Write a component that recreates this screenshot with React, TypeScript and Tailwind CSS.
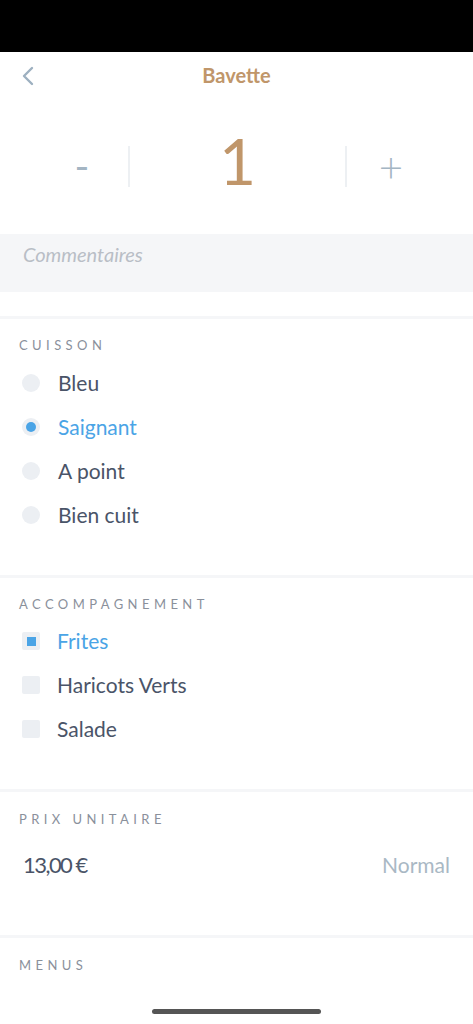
import { useState } from "react";

const font = { fontFamily: "Lato, 'Open Sans', sans-serif" };

const cuissons = ["Bleu", "Saignant", "A point", "Bien cuit"];
const accompagnements = ["Frites", "Haricots Verts", "Salade"];

function SectionTitle({ children }: { children: string }) {
  return (
    <div className="pl-[19px] text-[13px] tracking-[0.34em] text-[#8a909b] leading-none">
      {children}
    </div>
  );
}

function Divider() {
  return <div className="h-[3px] bg-[#f5f6f8]" />;
}

export default function App() {
  const [qty, setQty] = useState(1);
  const [cuisson, setCuisson] = useState("Saignant");
  const [sides, setSides] = useState<string[]>(["Frites"]);

  const toggleSide = (s: string) =>
    setSides(prev => (prev.includes(s) ? prev.filter(x => x !== s) : [...prev, s]));

  return (
    <div className="relative w-[473px] h-[1024px] bg-white overflow-hidden" style={font}>
      <div className="h-[52px] bg-black" />

      {/* header */}
      <div className="relative flex items-center justify-center h-[46px]">
        <button className="absolute left-[20px] top-[14px] text-[#9db0c0]">
          <svg width="16" height="20" viewBox="0 0 16 20" fill="none">
            <path d="M12 2 L4 10 L12 18" stroke="currentColor" strokeWidth="2.4" strokeLinecap="round" strokeLinejoin="round" />
          </svg>
        </button>
        <h1 className="text-[20px] font-bold text-[#c0966a]">Bavette</h1>
      </div>

      {/* stepper */}
      <div className="flex items-center h-[136px]">
        <button
          className="w-[128px] flex justify-center text-[#a4b5c3] text-[40px] leading-none pl-[36px]"
          onClick={() => setQty(q => Math.max(1, q - 1))}
        >
          -
        </button>
        <div className="w-[2px] h-[41px] bg-[#edf0f3]" />
        <div className="flex-1 text-center text-[64px] text-[#c0966a] leading-none -mt-[10px]">{qty}</div>
        <div className="w-[2px] h-[41px] bg-[#edf0f3]" />
        <button
          className="w-[126px] flex justify-center text-[#a4b5c3] text-[42px] font-light leading-none pr-[38px]"
          onClick={() => setQty(q => q + 1)}
        >
          +
        </button>
      </div>

      {/* commentaires */}
      <div className="h-[58px] bg-[#f5f6f8] flex items-center pl-[23px] pb-[19px]">
        <span className="text-[20px] italic text-[#b9bec6]">Commentaires</span>
      </div>

      <div className="h-[24px]" />
      <Divider />

      {/* cuisson */}
      <div className="pt-[20px] h-[256px]">
        <SectionTitle>CUISSON</SectionTitle>
        <div className="mt-[9px] flex flex-col">
          {cuissons.map(c => {
            const active = c === cuisson;
            return (
              <button key={c} className="flex items-center h-[44px] pl-[22px]" onClick={() => setCuisson(c)}>
                <span className="w-[18px] h-[18px] rounded-full bg-[#eceff3] flex items-center justify-center">
                  {active && <span className="w-[10px] h-[10px] rounded-full bg-[#4aa4e6]" />}
                </span>
                <span className={`ml-[18px] text-[21px] ${active ? "text-[#4aa4e6]" : "text-[#4a5468]"}`}>{c}</span>
              </button>
            );
          })}
        </div>
      </div>
      <Divider />

      {/* accompagnement */}
      <div className="pt-[20px] h-[211px]">
        <SectionTitle>ACCOMPAGNEMENT</SectionTitle>
        <div className="mt-[8px] flex flex-col">
          {accompagnements.map(s => {
            const active = sides.includes(s);
            return (
              <button key={s} className="flex items-center h-[44px] pl-[22px]" onClick={() => toggleSide(s)}>
                <span className="w-[18px] h-[18px] rounded-[2px] bg-[#eceff3] flex items-center justify-center">
                  {active && <span className="w-[9px] h-[9px] bg-[#4aa4e6]" />}
                </span>
                <span className={`ml-[17px] text-[21px] ${active ? "text-[#4aa4e6]" : "text-[#4a5468]"}`}>{s}</span>
              </button>
            );
          })}
        </div>
      </div>
      <Divider />

      {/* prix */}
      <div className="pt-[21px] h-[143px]">
        <SectionTitle>PRIX UNITAIRE</SectionTitle>
        <div className="mt-[22px] flex items-center justify-between pl-[23px] pr-[23px]">
          <span className="text-[22px] text-[#4a5468] tracking-[-0.07em]">13,00 €</span>
          <span className="text-[21px] text-[#a9b8c4]">Normal</span>
        </div>
      </div>
      <Divider />

      <div className="pt-[21px]">
        <SectionTitle>MENUS</SectionTitle>
      </div>

      <div className="absolute bottom-[10px] left-[152px] w-[169px] h-[5px] rounded-full bg-[#555]" />
    </div>
  );
}
